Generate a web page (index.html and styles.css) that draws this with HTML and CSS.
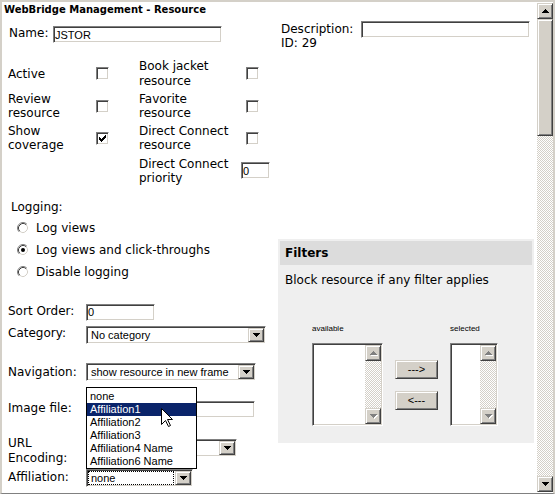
FILE: index.html
```
<!DOCTYPE html>
<html lang="en">
<head>
<meta charset="utf-8">
<title>WebBridge Management - Resource</title>
<link rel="stylesheet" href="styles.css">
</head>
<body>
<svg class="defs" width="0" height="0" aria-hidden="true">
  <symbol id="tri-down" viewBox="0 0 7 4"><path d="M0 0H7V1H6V2H5V3H4V4H3V3H2V2H1V1H0Z"/></symbol>
  <symbol id="tri-up" viewBox="0 0 7 4"><path d="M3 0H4V1H5V2H6V3H7V4H0V3H1V2H2V1H3Z"/></symbol>
  <symbol id="check" viewBox="0 0 7 7"><path d="M6 0h1v1h-1z M5 1h2v1h-2z M0 2h1v1h-1z M4 2h3v1h-3z M0 3h2v1h-2z M3 3h3v1h-3z M0 4h5v1h-5z M1 5h3v1h-3z M2 6h1v1h-1z"/></symbol>
  <symbol id="radio" viewBox="0 0 12 12">
    <circle cx="6" cy="6" r="5.5" fill="#fff"/>
    <path d="M2.11 9.89A5.5 5.5 0 0 1 9.89 2.11" fill="none" stroke="#808080"/>
    <path d="M2.82 9.18A4.5 4.5 0 0 1 9.18 2.82" fill="none" stroke="#404040"/>
    <path d="M9.18 2.82A4.5 4.5 0 0 1 2.82 9.18" fill="none" stroke="#d4d0c8"/>
  </symbol>
  <symbol id="radio-on" viewBox="0 0 12 12">
    <circle cx="6" cy="6" r="5.5" fill="#fff"/>
    <path d="M2.11 9.89A5.5 5.5 0 0 1 9.89 2.11" fill="none" stroke="#808080"/>
    <path d="M2.82 9.18A4.5 4.5 0 0 1 9.18 2.82" fill="none" stroke="#404040"/>
    <path d="M9.18 2.82A4.5 4.5 0 0 1 2.82 9.18" fill="none" stroke="#d4d0c8"/>
    <circle cx="6" cy="6" r="2" fill="#000"/>
  </symbol>
</svg>
<div class="frame">
  <div class="page">
    <div class="title">WebBridge Management - Resource</div>
    <div class="cols">
      <div class="left">
        <div class="name-row">
          <span class="name-lbl">Name:</span>
          <input class="tb w-name" value="JSTOR">
        </div>
        <div class="flags">
          <div class="fl">Active</div>
          <div class="fc"><span class="cb"></span></div>
          <div class="fl">Book jacket<br>resource</div>
          <div class="fc fc-r"><span class="cb"></span></div>

          <div class="fl">Review<br>resource</div>
          <div class="fc"><span class="cb"></span></div>
          <div class="fl">Favorite<br>resource</div>
          <div class="fc fc-r"><span class="cb"></span></div>

          <div class="fl">Show<br>coverage</div>
          <div class="fc"><span class="cb"><svg class="chk"><use href="#check"/></svg></span></div>
          <div class="fl">Direct Connect<br>resource</div>
          <div class="fc fc-r"><span class="cb"></span></div>

          <div class="fl"></div>
          <div class="fc"></div>
          <div class="fl">Direct Connect<br>priority</div>
          <div class="fc"><input class="tb w-prio" value="0"></div>
        </div>
        <div class="logging">
          <div class="log-title">Logging:</div>
          <div class="log-list">
            <div class="radio-row"><svg class="rd"><use href="#radio"/></svg><span>Log views</span></div>
            <div class="radio-row"><svg class="rd"><use href="#radio-on"/></svg><span>Log views and click-throughs</span></div>
            <div class="radio-row"><svg class="rd"><use href="#radio"/></svg><span>Disable logging</span></div>
          </div>
        </div>
        <div class="fields">
          <div class="f-row r-sort">
            <div class="f-lbl">Sort Order:</div>
            <input class="tb w-sort" value="0">
          </div>
          <div class="f-row r-cat">
            <div class="f-lbl">Category:</div>
            <div class="combo w-cat"><span class="combo-txt">No category</span><span class="combo-btn"><svg class="tri"><use href="#tri-down"/></svg></span></div>
          </div>
          <div class="f-row r-nav">
            <div class="f-lbl">Navigation:</div>
            <div class="combo w-nav"><span class="combo-txt">show resource in new frame</span><span class="combo-btn"><svg class="tri"><use href="#tri-down"/></svg></span></div>
          </div>
          <div class="f-row r-img">
            <div class="f-lbl">Image file:</div>
            <input class="tb w-img" value="">
          </div>
          <div class="f-row r-url">
            <div class="f-lbl">URL<br>Encoding:</div>
            <div class="combo w-url"><span class="combo-txt"></span><span class="combo-btn"><svg class="tri"><use href="#tri-down"/></svg></span></div>
          </div>
          <div class="f-row r-aff">
            <div class="f-lbl">Affiliation:</div>
            <div class="combo combo-focus w-aff"><span class="combo-txt">none</span><span class="combo-btn"><svg class="tri"><use href="#tri-down"/></svg></span>
              <div class="dd">
                <div class="dd-item">none</div>
                <div class="dd-item sel">Affiliation1</div>
                <div class="dd-item">Affiliation2</div>
                <div class="dd-item">Affiliation3</div>
                <div class="dd-item">Affiliation4 Name</div>
                <div class="dd-item">Affiliation6 Name</div>
                <svg class="cursor" viewBox="0 0 12 19"><path d="M0.5 0.5V16.5L4.5 12.5L7.5 18.5L9.5 17.5L6.5 11.5H11.5Z" fill="#fff" stroke="#000" stroke-linejoin="miter"/></svg>
              </div>
            </div>
          </div>
        </div>
      </div>
      <div class="right">
        <div class="desc-row">
          <span class="desc-lbl">Description:</span>
          <input class="tb w-desc" value="">
        </div>
        <div class="id-line">ID: 29</div>
        <div class="filters">
          <div class="f-head">Filters</div>
          <div class="f-text">Block resource if any filter applies</div>
          <div class="lists">
            <div class="lcol">
              <div class="tiny">available</div>
              <div class="listbox w-avail">
                <div class="lb-scroll">
                  <div class="lb-btn"><svg class="tri-dis"><use href="#tri-up"/></svg></div>
                  <div class="lb-track"></div>
                  <div class="lb-btn"><svg class="tri-dis"><use href="#tri-down"/></svg></div>
                </div>
              </div>
            </div>
            <div class="bcol">
              <button class="btn">---&gt;</button>
              <button class="btn">&lt;---</button>
            </div>
            <div class="lcol">
              <div class="tiny">selected</div>
              <div class="listbox w-sel">
                <div class="lb-scroll">
                  <div class="lb-btn"><svg class="tri-dis"><use href="#tri-up"/></svg></div>
                  <div class="lb-track"></div>
                  <div class="lb-btn"><svg class="tri-dis"><use href="#tri-down"/></svg></div>
                </div>
              </div>
            </div>
          </div>
        </div>
      </div>
    </div>
  </div>
  <div class="vscroll">
    <div class="sb-btn"><svg class="tri"><use href="#tri-up"/></svg></div>
    <div class="sb-thumb"></div>
    <div class="sb-track"></div>
    <div class="sb-btn"><svg class="tri"><use href="#tri-down"/></svg></div>
  </div>
</div>
</body>
</html>
```

FILE: styles.css
```
* { box-sizing: border-box; }
html, body { margin: 0; padding: 0; background: #fff; }
body {
  width: 555px; height: 495px; overflow: hidden;
  font-family: "DejaVu Sans", Verdana, sans-serif;
  font-size: 12px; line-height: 14.2px; color: #000;
}
.defs { position: absolute; width: 0; height: 0; overflow: hidden; }

.frame {
  width: 555px; height: 494px; display: flex;
  border-top: 2px solid #d4d0c8;
  border-left: 2px solid #d4d0c8;
  border-right: 2px solid #d4d0c8;
  border-bottom: 1px solid #808080;
}
.page { flex: 1; min-width: 0; padding: 2px 0 0 2px; position: relative; overflow: hidden; }
.title { font-weight: bold; font-size: 10px; line-height: 12px; height: 12px; white-space: nowrap; }
.cols { display: flex; }
.left { width: 274px; flex: none; }
.right { flex: 1; min-width: 0; }

/* classic sunken / raised */
.tb, .cb, .combo, .listbox {
  background: #fff;
  border: 1px solid;
  border-color: #808080 #fff #fff #808080;
  box-shadow: inset 1px 1px #404040, inset -1px -1px #d4d0c8;
}
.combo-btn, .sb-btn, .sb-thumb, .lb-btn, .btn {
  background: #d4d0c8;
  border: 1px solid;
  border-color: #d4d0c8 #404040 #404040 #d4d0c8;
  box-shadow: inset 1px 1px #fff, inset -1px -1px #808080;
}

.tb {
  -webkit-appearance: none; appearance: none; margin: 0; border-radius: 0;
  height: 17px; padding: 0 1px;
  font: 11px "Liberation Sans", Arial, sans-serif; color: #000; outline: none;
}
.w-name { width: 169px; }
.w-prio { width: 29px; }
.w-sort { width: 69px; }
.w-img { width: 169px; }
.w-desc { width: 169px; margin-top: -1px; margin-bottom: -3px; }

.name-row { display: flex; align-items: flex-start; margin-top: 10px; }
.name-lbl { width: 49px; padding-left: 5px; flex: none; }

.flags {
  display: grid;
  grid-template-columns: 88px 43px 102px auto;
  grid-auto-rows: 32.4px;
  align-items: center;
  margin-top: 14.5px;
  padding-left: 4px;
}
.fc { display: flex; align-items: center; }
.fc-r { padding-left: 5px; }
.cb { display: inline-block; width: 13px; height: 13px; position: relative; flex: none; }
.chk { position: absolute; left: 2px; top: 2px; width: 7px; height: 7px; fill: #000; }

.logging { margin-top: 12.7px; padding-left: 7px; }
.log-list { margin-top: 2.9px; }
.radio-row { display: flex; align-items: center; height: 22px; padding-left: 6px; }
.rd { width: 12px; height: 12px; margin-right: 7px; flex: none; }

.fields { margin-top: 21.1px; }
.f-row { display: flex; align-items: flex-start; padding-left: 4px; }
.f-lbl { width: 78px; flex: none; }
.r-sort .f-lbl { margin-top: 0; }
.r-cat { margin-top: 5px; }
.r-cat .f-lbl { margin-top: 0.5px; }
.r-nav { margin-top: 19px; }
.r-nav .f-lbl { margin-top: 2.5px; }
.r-img { margin-top: 20px; }
.r-url { margin-top: 21px; }
.r-url .f-lbl { margin-top: -2.5px; }
.r-aff { margin-top: 4.1px; }
.r-aff .f-lbl { margin-top: 1.5px; }

.combo {
  display: flex; height: 18px; padding: 1px; position: relative;
  font: 11px/14px "Liberation Sans", Arial, sans-serif;
}
.combo-txt { flex: 1; min-width: 0; padding-left: 3px; white-space: nowrap; overflow: hidden; }
.combo-btn { width: 16px; flex: none; display: flex; align-items: center; justify-content: center; }
.combo-focus .combo-txt { outline: 1px dotted #000; outline-offset: -1px; margin-right: 1px; }
.tri { width: 7px; height: 4px; fill: #000; display: block; }
.w-cat { width: 180px; }
.w-nav { width: 170px; }
.w-url { width: 151px; }
.w-aff { width: 107px; }

.dd {
  position: absolute; left: -1px; bottom: calc(100% + 1px);
  width: 111px; background: #fff; border: 1px solid #000;
  padding-top: 2px; z-index: 5;
  font: 11px/13px "Liberation Sans", Arial, sans-serif;
}
.dd-item { height: 13px; padding-left: 3px; white-space: nowrap; }
.dd-item.sel { background: #0a246a; color: #fff; }
.cursor { position: absolute; left: 74px; top: 20px; width: 12px; height: 19px; overflow: visible; }

.desc-row { display: flex; align-items: flex-start; margin-top: 6.3px; padding-left: 3px; }
.desc-lbl { width: 80px; flex: none; }
.id-line { padding-left: 3px; margin-top: -0.5px; }

.filters { margin-top: 189.2px; width: 256px; height: 204px; background: #efefef; padding: 2px; }
.f-head { height: 24px; line-height: 25px; background: #dcdcdc; padding-left: 5px; font-weight: bold; }
.f-text { margin-top: 7.5px; padding-left: 5px; white-space: nowrap; }
.lists { display: flex; margin-top: 36.5px; padding-left: 32px; }
.lcol { display: flex; flex-direction: column; }
.tiny { font: 8px/10px "Liberation Sans", Arial, sans-serif; height: 10px; }
.listbox { margin-top: 9.1px; height: 83px; display: flex; padding: 1px; }
.w-avail { width: 71px; }
.w-sel { width: 48px; }
.lb-scroll { width: 16px; margin-left: auto; display: flex; flex-direction: column; }
.lb-btn { height: 16px; flex: none; display: flex; align-items: center; justify-content: center; }
.lb-track, .sb-track {
  flex: 1;
  background-color: #fff;
  background-image: repeating-conic-gradient(#d4d0c8 0 25%, #fff 0 50%);
  background-size: 2px 2px;
}
.tri-dis { width: 7px; height: 4px; fill: #808080; display: block; filter: drop-shadow(1px 1px 0 #fff); }
.bcol { display: flex; flex-direction: column; padding-top: 36.1px; margin: 0 12px; }
.btn {
  width: 43px; height: 19px; padding: 0; margin: 0; border-radius: 0;
  font: 11px "Liberation Sans", Arial, sans-serif; color: #000;
}
.btn + .btn { margin-top: 12px; }

.vscroll { width: 16px; flex: none; display: flex; flex-direction: column; margin: 1px 0; }
.sb-btn { height: 16px; flex: none; display: flex; align-items: center; justify-content: center; }
.sb-thumb { height: 117px; flex: none; }
```
